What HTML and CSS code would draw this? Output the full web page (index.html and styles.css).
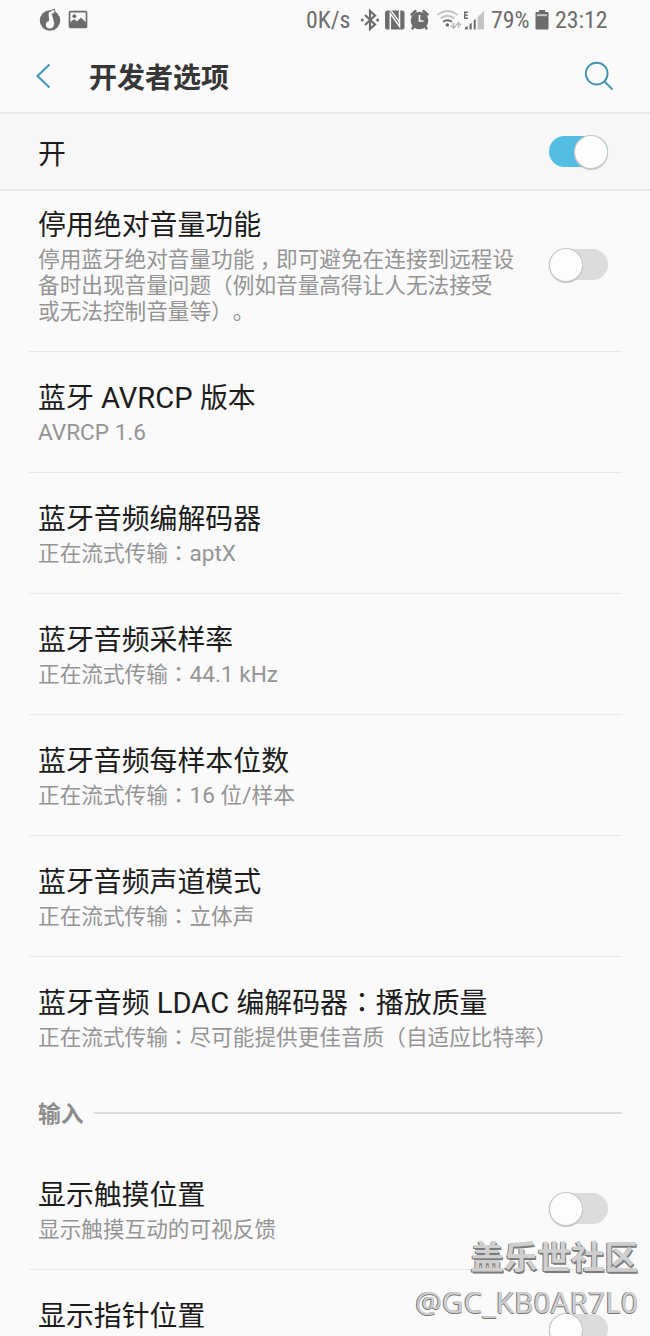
FILE: index.html
```
<!DOCTYPE html>
<html lang="zh-CN">
<head>
<meta charset="utf-8">
<title>开发者选项</title>
<link rel="stylesheet" href="styles.css">
</head>
<body>
<div class="screen">
  <div class="status">
    <svg class="status-left" width="50" height="24" viewBox="0 0 50 24">
      <circle cx="11" cy="12.500" r="10.200" fill="#6c6c6c"/>
      <path d="M9.500 4.500L15.500 1l.8 3.500-3.300 2.300 2.500 9.200-2 2-3-1z" fill="#fafafa"/>
      <path d="M9.500 4.300L15.300 1l.8 3.300-3.600 2.200" fill="none" stroke="#6c6c6c" stroke-width="1"/>
      <ellipse cx="10.800" cy="16.800" rx="3.900" ry="3.700" fill="#fafafa"/>
      <rect x="30.500" y="3.700" width="17" height="15.600" rx="1" fill="none" stroke="#6c6c6c" stroke-width="1.700"/>
      <path d="M31 18.500v-4l4-3.500 3 2.500 4-4 5 5v5H31z" fill="#6c6c6c"/>
      <circle cx="35.300" cy="8.200" r="1.900" fill="#6c6c6c"/>
    </svg>
    <span class="speed">0K/s</span>
    <svg class="status-icons" width="128" height="24" viewBox="0 0 128 24">
      <path d="M5 7l10 9.500-5 4.500V3l5 4.500L5 17" fill="none" stroke="#6c6c6c" stroke-width="2.200"/>
      <circle cx="2.300" cy="12" r="1.500" fill="#6c6c6c"/><circle cx="17.700" cy="12" r="1.500" fill="#6c6c6c"/>
      <rect x="25" y="2.500" width="19.500" height="19" rx="2.500" fill="#6c6c6c"/>
      <path d="M30.300 22V5.500l9.200 13V2" fill="none" stroke="#fafafa" stroke-width="1.500"/>
      <path d="M30.500 2l9 12" stroke="#fafafa" stroke-width="1.300"/>
      <circle cx="59.500" cy="12.500" r="8.800" fill="#6c6c6c"/>
      <path d="M51.500 6.500l4-3.500M67.500 6.500l-4-3.500M54 18l-1.500 2.500M65 18l1.500 2.500" stroke="#6c6c6c" stroke-width="2.500" stroke-linecap="round"/>
      <path d="M59.500 7v6h4" fill="none" stroke="#fafafa" stroke-width="1.700"/>
      <g fill="none" stroke="#c4c4c4" stroke-width="1.900">
        <path d="M77.500 7q10-8 20 0"/>
        <path d="M80.500 10.500q7-5.500 14 0"/>
      </g>
      <path d="M83 13.800q4.500-3.300 9 0" fill="none" stroke="#6c6c6c" stroke-width="2"/>
      <circle cx="87.300" cy="17" r="1.800" fill="#6c6c6c"/>
      <path d="M93.500 15v5m-2.500-2.500l2.500 2.700 2.500-2.700M98.500 20v-5.500m-2.300 2.800l2.300-2.800 2.300 2.800" fill="none" stroke="#b8b8b8" stroke-width="1.400"/>
      <path d="M108 4.200H104.700v6h3.300M104.700 7.200h3" fill="none" stroke="#6c6c6c" stroke-width="1.400"/>
      <path d="M105 21.500v-2l2.700-1.500v3.500zM109.500 21.500v-5l2.200-2v7zM113.700 21.500V12.500l2-1.800v10.800z" fill="#6c6c6c"/>
      <path d="M117.500 21.500V9l6.500-6v18.500z" fill="#c4c4c4"/>
    </svg>
    <span class="percent">79%</span>
    <svg class="battery" width="14" height="20" viewBox="0 0 14 20">
      <path d="M4 2V0h6v2h2.500q1 0 1 1v15.500q0 1-1 1h-11q-1 0-1-1V3q0-1 1-1z" fill="#6c6c6c"/>
      <path d="M2 4.200h10v2H2z" fill="#c9c9c9"/>
    </svg>
    <span class="clock">23:12</span>
  </div>

  <div class="appbar">
    <svg width="16" height="26" viewBox="0 0 16 26"><path d="M14.500 1.500L2.500 13l12 11.500" fill="none" stroke="#4a9ab8" stroke-width="2.200"/></svg>
    <h1 class="heading">开发者选项</h1>
    <svg class="search" width="30" height="30" viewBox="0 0 30 30"><g fill="none" stroke="#4593b1" stroke-width="1.900"><circle cx="12.700" cy="12.600" r="10.900"/><path d="M20.500 20.500l8 8"/></g></svg>
  </div>

  <div class="master">
    <span class="title">开</span>
    <span class="switch on"></span>
  </div>

  <div class="row first">
    <div class="text">
      <div class="title">停用绝对音量功能</div>
      <div class="sub">停用蓝牙绝对音量功能<span class="comma">，</span>即可避免在连接到远程设<br>备时出现音量问题（例如音量高得让人无法接受<br>或无法控制音量等）。</div>
    </div>
    <span class="switch"></span>
  </div>
  <div class="row"><div class="text"><div class="title">蓝牙<span class="latin"> AVRCP </span>版本</div><div class="sub"><span class="latin">AVRCP 1.6</span></div></div></div>
  <div class="row"><div class="text"><div class="title">蓝牙音频编解码器</div><div class="sub">正在流式传输<span class="colon" lang="zh-TW">：</span><span class="latin">aptX</span></div></div></div>
  <div class="row"><div class="text"><div class="title">蓝牙音频采样率</div><div class="sub">正在流式传输<span class="colon" lang="zh-TW">：</span><span class="latin">44.1 kHz</span></div></div></div>
  <div class="row"><div class="text"><div class="title">蓝牙音频每样本位数</div><div class="sub">正在流式传输<span class="colon" lang="zh-TW">：</span><span class="latin">16 </span>位<span class="latin">/</span>样本</div></div></div>
  <div class="row"><div class="text"><div class="title">蓝牙音频声道模式</div><div class="sub">正在流式传输<span class="colon" lang="zh-TW">：</span>立体声</div></div></div>
  <div class="row last"><div class="text"><div class="title">蓝牙音频<span class="latin"> LDAC </span>编解码器<span class="colon" lang="zh-TW">：</span>播放质量</div><div class="sub">正在流式传输<span class="colon" lang="zh-TW">：</span>尽可能提供更佳音质（自适应比特率）</div></div></div>

  <div class="section"><span class="section-name">输入</span><span class="rule"></span></div>

  <div class="row">
    <div class="text"><div class="title">显示触摸位置</div><div class="sub">显示触摸互动的可视反馈</div></div>
    <span class="switch"></span>
  </div>
  <div class="row">
    <div class="text"><div class="title">显示指针位置</div><div class="sub">&nbsp;</div></div>
    <span class="switch"></span>
  </div>

  <div class="watermark">
    <div class="mark-name">盖乐世社区</div>
    <div class="mark-user">@GC_KB0AR7L0</div>
  </div>
</div>
</body>
</html>
```
FILE: styles.css
```
* { box-sizing: border-box; }
body {
  margin: 0;
  background: #fafafa;
  font-family: Roboto, "Noto Sans CJK SC", sans-serif;
  text-spacing-trim: space-all;
}
.screen {
  position: relative;
  width: 650px;
  height: 1336px;
  overflow: hidden;
  background: #fafafa;
}
.status {
  display: flex;
  align-items: center;
  height: 40px;
  padding: 0 42px 0 39px;
  color: #6c6c6c;
  font-family: "Roboto Condensed", Roboto, sans-serif;
  font-size: 23.8px;
}
.status span { flex: none; white-space: nowrap; }
.status svg { flex: none; }
.status-left { margin-top: -1px; }
.speed { width: 45px; margin-left: 217px; }
.status-icons { margin-left: 9px; }
.percent { width: 39px; margin-left: 3px; }
.battery { margin-left: 5px; }
.clock { width: 52px; margin-left: 6px; }
.appbar {
  display: flex;
  align-items: center;
  height: 74px;
  padding: 2px 36px 2px 35px;
  border-bottom: 2px solid #e9e9e9;
}
.heading {
  margin: 0 0 0 38px;
  padding-top: 6px;
  color: #363636;
  font-size: 28px;
  line-height: 40px;
  font-weight: 700;
}
.search { margin-left: auto; }
.master {
  display: flex;
  align-items: center;
  justify-content: space-between;
  height: 77px;
  padding: 0 42px 0 38px;
  background: #f7f7f7;
  border-bottom: 2px solid #e6e6e6;
}
.row {
  display: flex;
  align-items: flex-start;
  justify-content: space-between;
  height: 121px;
  margin: 0 28px 0 29px;
  padding: 27px 14px 0 9px;
  border-bottom: 1px solid #e8e8e8;
}
.row.first { height: 161px; padding-top: 15px; }
.row.last { height: 120px; border-bottom: 0; }
.text { flex: none; white-space: nowrap; }
.title {
  height: 36px;
  color: #1c1c1c;
  font-size: 27.9px;
  line-height: 40px;
}
.master .title { line-height: 41px; }
.sub {
  margin-top: 4px;
  height: 26px;
  color: #949494;
  font-size: 21.65px;
  line-height: 28px;
}
.row.first .sub { height: 78px; line-height: 26px; padding-top: 1px; }
.latin { font-size: 1.045em; line-height: 1; }
.colon { font-family: "Noto Sans CJK TC", sans-serif; line-height: 1; }
.comma { margin: 0 .25em; font-feature-settings: "halt"; }
.switch {
  position: relative;
  flex: none;
  width: 59px;
  height: 31px;
  border-radius: 16px;
  background: #dcdcdc;
}
.row .switch { margin-top: 17px; }
.row.first .switch { margin-top: 43px; }
.switch::after {
  content: "";
  position: absolute;
  top: 0;
  left: 1px;
  width: 32px;
  height: 32px;
  border-radius: 50%;
  background: #fdfdfd;
  box-shadow: 0 0 0 1px #c6c6c6, 0 1px 1px 1px #c4c4c4;
}
.switch.on { background: #54bde3; }
.switch.on::after { left: 26px; }
.section {
  display: flex;
  align-items: center;
  height: 72px;
  margin: 0 28px 0 38px;
}
.section-name {
  padding-top: 4px;
  color: #8c8c8c;
  font-size: 22.8px;
  line-height: 30px;
  font-weight: 700;
}
.rule {
  flex: 1;
  height: 2px;
  margin-left: 10px;
  background: #dadada;
}
.watermark {
  position: absolute;
  right: 12px;
  bottom: 14px;
  text-align: right;
  white-space: nowrap;
  color: #cfcfcf;
}
.mark-name {
  font-size: 33.5px;
  line-height: 48px;
  font-weight: 700;
  text-shadow: -1px 1px 0 #7c7c7c, 1px 2px 0 #7c7c7c;
}
.mark-user {
  font-family: "Noto Sans", sans-serif;
  font-size: 29.8px;
  line-height: 40px;
  text-shadow: -1px 0 0 #777, 0 1px 0 #777;
}
```
